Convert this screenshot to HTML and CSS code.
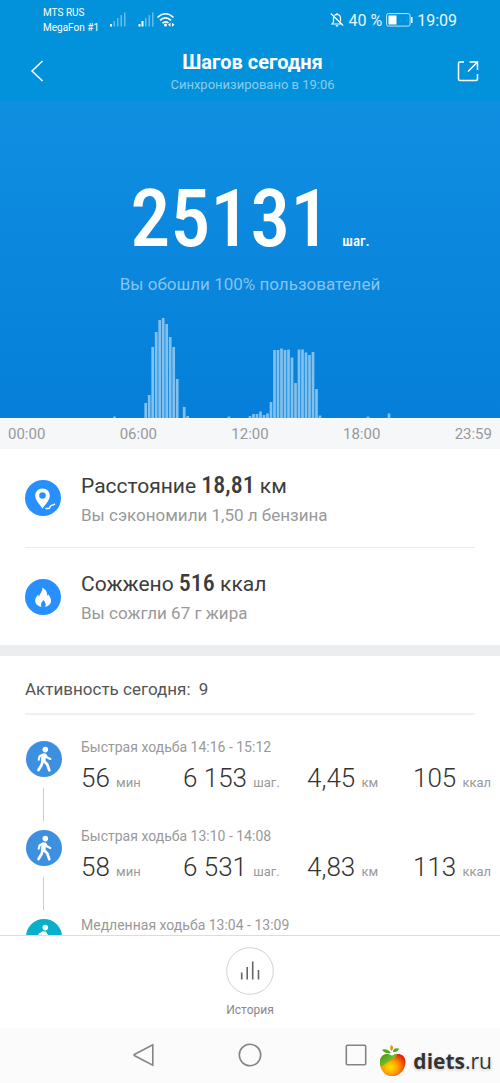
FILE: index.html
```html
<!DOCTYPE html>
<html lang="ru">
<head>
<meta charset="utf-8">
<meta name="viewport" content="width=device-width, initial-scale=1">
<title>Шагов сегодня</title>
<link rel="stylesheet" href="styles.css">
</head>
<body>
<svg class="defs" aria-hidden="true">
  <symbol id="walker" viewBox="0 0 36 36">
    <circle cx="19.300" cy="8.600" r="2.800" fill="#fff"/>
    <g fill="none" stroke="#fff" stroke-linecap="round" stroke-linejoin="round">
      <path stroke-width="4.600" d="M17.900 14.800L17.100 19.500"/>
      <path stroke-width="2.100" d="M17 13.300L13.500 15.500L12.700 18.800M19.300 13.500L21.200 16.500L24.300 18"/>
      <path stroke-width="2.700" d="M16.600 20L15.600 24L12.500 29M18 20L21.300 23.500L23.300 29.300"/>
    </g>
  </symbol>
</svg>
<div class="screen">
  <header class="top">
    <div class="status">
      <div class="carriers"><span>MTS RUS</span><span>MegaFon #1</span></div>
      <svg class="signals" viewBox="0 0 68 18" width="68" height="18" aria-hidden="true">
        <g fill="#fff">
          <rect x="1" y="13" width="2" height="2.500"/>
          <g opacity=".4"><rect x="4.500" y="10" width="1.500" height="5.500"/><rect x="8" y="7" width="1.500" height="8.500"/><rect x="11.500" y="4" width="1.500" height="11.500"/><rect x="15" y="1.500" width="1.500" height="14"/></g>
          <rect x="29.500" y="13" width="2" height="2.500"/><rect x="32.500" y="10" width="2" height="5.500"/>
          <g opacity=".4"><rect x="36" y="7" width="1.500" height="8.500"/><rect x="39.500" y="4" width="1.500" height="11.500"/><rect x="43" y="1.500" width="1.500" height="14"/></g>
        </g>
        <g fill="none" stroke="#fff" stroke-width="1.600"><path d="M48.500 6.500Q56.500-1 64.500 6.500M51 9.300Q56.500 4.300 62 9.300M53.500 12.200Q56.500 9.500 59.500 12"/></g>
        <circle cx="56.500" cy="14" r="1.500" fill="#fff"/>
        <path d="M59 13.700L61.500 11.700V15.700ZM65.500 13.700L63 11.700V15.700Z" fill="#fff"/>
      </svg>
      <div class="status-right">
        <svg viewBox="0 0 14 16" width="14" height="16" fill="none" stroke="#fff" stroke-width="1.200" aria-hidden="true"><path d="M3.500 5V10L2 12H11M4.500 3.500Q5.500 2.300 7 2.300Q10.500 2.500 10.500 6.500V9.500M7 2.300V1M5.800 13.800H8.200M.8 1.500L13.200 13.500"/></svg>
        <span>40 %</span>
        <svg viewBox="0 0 27 14" width="27" height="14" aria-hidden="true"><rect x=".6" y=".6" width="23.500" height="12.500" rx="1.800" fill="none" stroke="#fff" stroke-opacity=".75"/><rect x="2.500" y="2.500" width="8" height="9" fill="#fff"/><rect x="25" y="4" width="1.500" height="6" fill="#fff"/></svg>
        <span>19:09</span>
      </div>
    </div>
    <div class="titlebar">
      <button class="icon-btn" aria-label="Назад"><svg viewBox="0 0 24 24" width="24" height="24" fill="none" stroke="#fff" stroke-width="1.500"><path d="M17.500 2L7 12L17.500 22"/></svg></button>
      <div class="titles"><h1>Шагов сегодня</h1><p>Синхронизировано в 19:06</p></div>
      <button class="icon-btn" aria-label="Поделиться"><svg viewBox="0 0 24 24" width="24" height="24" fill="none" stroke="#fff" stroke-width="1.500"><path d="M8 3H4Q2.500 3 2.500 4.500V20Q2.500 21.500 4 21.500H20Q21.500 21.500 21.500 20V15M12 12.500L21 3.500M13.500 3H21.500V11"/></svg></button>
    </div>
  </header>

  <section class="hero">
    <p class="total"><span class="total-num">25131</span><span class="total-unit">шаг.</span></p>
    <p class="beat">Вы обошли 100% пользователей</p>
    <svg class="chart" viewBox="0 0 500 101" preserveAspectRatio="none" role="img" aria-label="Шаги по времени суток">
      <path stroke="#82c1ed" stroke-width="2.700" d="M114.500 101v-1.500M145.700 101v-15M149.200 101v-23M152.700 101v-71M156.200 101v-86M159.700 101v-98M163.200 101v-100M166.700 101v-94M170.200 101v-81M173.700 101v-71M177.200 101v-39M184.200 101v-11M187.700 101v-2M229 101v-1.500M250 101v-2M253.500 101v-4M257 101v-4M260.500 101v-6.500M264 101v-3M267.500 101v-4.500M271 101v-16M274.500 101v-68M278 101v-68M281.500 101v-69.500M285 101v-68M288.500 101v-68.500M292 101v-60.500M295.500 101v-35M299 101v-68.500M302.500 101v-68.500M306 101v-65.500M309.500 101v-63M313 101v-66M316.500 101v-29M320 101v-2.500M368 101v-1.500M389 101v-4.500"/>
    </svg>
  </section>
  <div class="axis"><span>00:00</span><span>06:00</span><span>12:00</span><span>18:00</span><span>23:59</span></div>

  <section class="facts">
    <article class="fact">
      <svg viewBox="0 0 36 36" width="36" height="36" aria-hidden="true"><circle cx="18" cy="18" r="18" fill="#288fff"/><path fill="#fff" fill-rule="evenodd" d="M17.500 8.500C13.300 8.500 10.300 11.500 10.300 15.400C10.300 20 14 23.500 17.500 28.500C21 23.500 24.800 20 24.800 15.400C24.800 11.500 21.700 8.500 17.500 8.500ZM17.500 12.200A3.300 3.300 0 1 1 17.500 18.800A3.300 3.300 0 1 1 17.500 12.200Z"/><path d="M20.500 28.500H23.500Q24.800 28.500 25 27Q25.300 25.500 27 25.300Q28.500 25.200 30 23.800" fill="none" stroke="#fff" stroke-width="1.500"/></svg>
      <div><h2>Расстояние <b>18,81</b> км</h2><p>Вы сэкономили 1,50 л бензина</p></div>
    </article>
    <article class="fact">
      <svg viewBox="0 0 36 36" width="36" height="36" aria-hidden="true"><circle cx="18" cy="18" r="18" fill="#288fff"/><path fill="#fff" d="M17.200 8.500C20.500 10 22.500 13 22.200 17C22.700 16.700 23 16 23 15.300C25 17.500 26 19.500 26 21.800C26 25 23.500 27.300 20 28C21.500 25.500 20.500 23 18.200 21C17.800 22.500 16.300 23.300 16 25C15.800 26 16 27.200 16.700 28C12.800 27.300 10.200 25 10.200 21.800C10.200 19.300 11.300 17.300 13.200 15.500C13.200 16.500 13.500 17.200 14.200 17.700C14.500 14.500 18 12.500 17.200 8.500Z"/></svg>
      <div><h2>Сожжено <b>516</b> ккал</h2><p>Вы сожгли 67 г жира</p></div>
    </article>
  </section>

  <section class="activity">
    <h3>Активность сегодня: <span>9</span></h3>
    <ol class="log">
      <li>
        <svg class="badge" width="36" height="36" aria-hidden="true"><use href="#walker"/></svg>
        <div class="entry"><p>Быстрая ходьба 14:16 - 15:12</p>
          <div class="stats"><span><b>56</b> мин</span><span><b>6 153</b> шаг.</span><span><b>4,45</b> км</span><span><b>105</b> ккал</span></div></div>
      </li>
      <li>
        <svg class="badge" width="36" height="36" aria-hidden="true"><use href="#walker"/></svg>
        <div class="entry"><p>Быстрая ходьба 13:10 - 14:08</p>
          <div class="stats"><span><b>58</b> мин</span><span><b>6 531</b> шаг.</span><span><b>4,83</b> км</span><span><b>113</b> ккал</span></div></div>
      </li>
      <li>
        <svg class="badge slow" width="36" height="36" aria-hidden="true"><use href="#walker"/></svg>
        <div class="entry"><p>Медленная ходьба 13:04 - 13:09</p></div>
      </li>
    </ol>
  </section>

  <footer class="history">
    <button class="history-btn">
      <svg viewBox="0 0 48 48" width="48" height="48" fill="none" aria-hidden="true"><circle cx="24" cy="24" r="23.300" stroke="#d2d2d2"/><path stroke="#666" stroke-width="1.600" d="M15.700 32.500V25.500M21.200 32.500V20M26.700 32.500V14.500M32.500 32.500V23"/></svg>
      <span>История</span>
    </button>
  </footer>
  <nav class="sysnav">
    <button aria-label="Назад"><svg viewBox="0 0 24 24" width="24" height="24"><path d="M20.800 1.800V22.200L2.300 12.500Q1.700 12 2.300 11.500Z"/></svg></button>
    <button aria-label="Домой"><svg viewBox="0 0 24 24" width="24" height="24"><circle cx="12" cy="12" r="10.700"/></svg></button>
    <button aria-label="Недавние"><svg viewBox="0 0 24 24" width="24" height="24"><rect x="2.300" y="2.300" width="19.400" height="19.400" rx="1"/></svg></button>
  </nav>
  <div class="brand">
    <svg viewBox="0 0 28 34" width="28" height="34" aria-hidden="true">
      <defs>
        <radialGradient id="apple" cx=".4" cy=".6" r=".65"><stop offset="0" stop-color="#ffe500"/><stop offset=".5" stop-color="#ff9a00"/><stop offset="1" stop-color="#e3260c"/></radialGradient>
        <linearGradient id="green" x1="0" y1="0" x2="1" y2="1"><stop offset="0" stop-color="#2e9a1c"/><stop offset="1" stop-color="#b8d422"/></linearGradient>
      </defs>
      <path fill="url(#apple)" d="M13 12C17 8.500 26.500 9 26.500 18C26.500 25 21 32.500 13.500 32C5 32.500 1 25 1 18.500C1 10 8.500 8.500 13 12Z"/>
      <path fill="url(#green)" d="M13 12C8.500 8.500 1 10 1 18.500V22C5 23 7 19 10 17.500C13 16 17 15 18 9.800Q15 10.300 13 12Z"/>
      <path fill="#4caf22" d="M12 9Q5 10 3 5.500Q9 4 12 9ZM14 8Q14 3 20 4.500Q19 8.500 14 8Z"/>
      <path fill="#f08a18" d="M12.500 7Q9.500 3.500 12.800 1Q15.500 4 12.500 7Z"/>
    </svg>
    <span><b>diets</b>.ru</span>
  </div>
</div>
</body>
</html>
```
FILE: styles.css
```css
* { box-sizing: border-box; }
body, h1, h2, h3, p, ol { margin: 0; padding: 0; }
body { font-family: Roboto, "Noto Sans", sans-serif; background: #fff; color: #3c3c3c; }
button { border: 0; background: none; padding: 0; font: inherit; color: inherit; }
svg { display: block; flex: none; }
.defs { position: absolute; width: 0; height: 0; }
.screen { position: relative; min-height: 100vh; display: flex; flex-direction: column; }

.top { background: #0292db; color: #fff; padding-bottom: 7px; }
.status { display: flex; align-items: center; height: 40px; padding: 0 43px; }
.carriers { display: flex; flex-direction: column; width: 66px; font-size: 10px; line-height: 15px; white-space: nowrap; }
.status-right { margin-left: auto; display: flex; align-items: center; gap: 4px; font-size: 16px; color: #e9f6fd; }
.titlebar { display: flex; align-items: center; justify-content: space-between; padding: 8px 20px 0 25px; }
.icon-btn { width: 24px; height: 24px; }
.titles { text-align: center; }
.titles h1 { font-size: 20px; line-height: 28px; font-weight: 700; }
.titles p { font-size: 13px; line-height: 18px; color: #8acbed; }

.hero { background: linear-gradient(#108fe1, #057fd9); color: #fff; padding-top: 68px; text-align: center; }
.total { display: flex; justify-content: center; align-items: baseline; gap: 12px; font-family: "Roboto Condensed", Roboto, sans-serif; font-weight: 500; line-height: 100px; }
.total-num { font-size: 80px; }
.total-unit { font-size: 15px; line-height: 20px; }
.beat { margin-top: 4px; font-size: 17px; line-height: 22px; color: #88c3ee; }
.chart { width: 100%; height: 101px; margin-top: 22px; }
.axis { display: flex; justify-content: space-between; padding: 0 8px; background: #f6f7f9; border-top: 1px solid #fff; font-size: 15px; line-height: 30px; color: #999; }

.facts { padding: 0 25px; border-bottom: 11px solid #ecedef; }
.fact { display: flex; align-items: center; gap: 20px; height: 98px; }
.fact + .fact { border-top: 1px solid #ebebeb; }
.fact h2 { font-size: 21px; font-weight: 400; line-height: 30px; padding-top: 2px; }
.fact h2 b { font-family: "Roboto Condensed", Roboto, sans-serif; font-size: 24px; font-weight: 500; }
.fact p { font-size: 17px; line-height: 28px; color: #999; }

.activity { flex: 1 1 0; min-height: 0; overflow: hidden; padding: 0 25px; }
.activity h3 { border-bottom: 2px solid #f0f0f0; font-size: 17px; font-weight: 400; line-height: 57px; padding-top: 5px; height: 59px; color: #555; }
.activity h3 span { margin-left: 4px; }
.log { list-style: none; padding-top: 21px; }
.log li { position: relative; display: flex; gap: 19px; height: 89px; padding-left: 1px; }
.log li:not(:last-child)::after { content: ""; position: absolute; left: 18px; top: 52px; width: 1px; height: 33px; background: #ccc; }
.badge { margin-top: 5px; border-radius: 50%; background: #3d8fe0; }
.slow { background: #0aafcb; }
.entry { flex: 1; }
.entry p { font-size: 14px; line-height: 22px; color: #999; }
.stats { display: grid; grid-template-columns: 102px 124px 106px auto; line-height: 40px; font-size: 13px; color: #999; white-space: nowrap; }
.stats b { font-size: 26px; font-weight: 300; color: #333; margin-right: 3px; }

.history { display: flex; justify-content: center; border-top: 1px solid #dcdcdc; height: 93px; padding-top: 11px; background: #fff; }
.history-btn { display: flex; flex-direction: column; align-items: center; gap: 4px; font-size: 12px; line-height: 22px; color: #888; }
.sysnav { display: flex; justify-content: center; gap: 82px; height: 55px; padding-bottom: 1px; align-items: center; background: #fbfbfb; }
.sysnav svg { fill: none; stroke: #858585; stroke-width: 1.6; }
.brand { position: absolute; right: 8px; bottom: 5px; display: flex; align-items: center; gap: 6px; font-family: "Open Sans", sans-serif; font-size: 21px; line-height: 34px; color: #333; text-shadow: 0 0 2px #fff, 0 1px 3px #bbb; }
```
